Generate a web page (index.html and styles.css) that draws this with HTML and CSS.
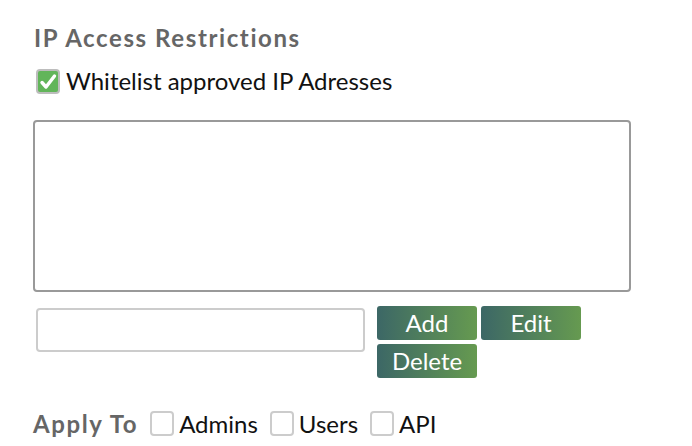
FILE: index.html
```html
<!DOCTYPE html>
<html>
<head>
<meta charset="utf-8">
<link rel="stylesheet" href="styles.css">
</head>
<body>
<div class="panel">
  <h2 class="title">IP Access Restrictions</h2>
  <label class="check-row">
    <span class="cb cb-on">
      <svg width="24" height="25" viewBox="0 0 24 25">
        <rect x="1" y="1" width="22" height="23" rx="3" fill="#62b55a" stroke="#bdbdbd" stroke-width="2"/>
        <path d="M6 13.5 L10 18 L18.5 7" fill="none" stroke="#fff" stroke-width="3.4" stroke-linecap="round" stroke-linejoin="round"/>
      </svg>
    </span>
    <span class="label-text">Whitelist approved IP Adresses</span>
  </label>
  <div class="listbox"></div>
  <div class="entry-row">
    <div class="ip-input"></div>
    <div class="btns">
      <button class="btn">Add</button>
      <button class="btn">Edit</button>
      <button class="btn">Delete</button>
    </div>
  </div>
  <div class="apply-row">
    <span class="apply-label">Apply To</span>
    <span class="cb cb-off"></span><span class="opt">Admins</span>
    <span class="cb cb-off"></span><span class="opt">Users</span>
    <span class="cb cb-off"></span><span class="opt">API</span>
  </div>
</div>
</body>
</html>
```
FILE: styles.css
```css
html, body {
  margin: 0;
  padding: 0;
  background: #fff;
  font-family: Lato, "Open Sans", sans-serif;
}
.panel {
  padding: 24px 0 0 33px;
  width: 600px;
}
.title {
  margin: 0;
  font-size: 24px;
  line-height: 28px;
  font-weight: 700;
  color: #666;
  letter-spacing: 1.6px;
  padding-left: 1px;
}
.check-row {
  display: flex;
  align-items: center;
  margin-top: 17px;
  height: 25px;
  padding-left: 3px;
}
.cb {
  display: inline-block;
  flex: none;
}
.cb-on {
  width: 24px;
  height: 25px;
}
.cb-on svg { display: block; }
.label-text {
  margin-left: 6px;
  font-size: 24px;
  line-height: 28px;
  color: #111;
  position: relative;
  top: -1px;
}
.listbox {
  margin-top: 26px;
  width: 594px;
  height: 168px;
  border: 2px solid #999;
  border-radius: 4px;
}
.entry-row {
  display: flex;
  margin-top: 14px;
  padding-left: 3px;
}
.ip-input {
  width: 325px;
  height: 40px;
  margin-top: 2px;
  border: 2px solid #ccc;
  border-radius: 4px;
  flex: none;
}
.btns {
  margin-left: 12px;
  width: 208px;
  display: flex;
  flex-wrap: wrap;
  gap: 4px;
}
.btn {
  width: 100px;
  height: 34px;
  border: none;
  border-radius: 3px;
  padding: 0;
  background: linear-gradient(to right, #3c6766, #669a50);
  color: #fff;
  font-family: Lato, "Open Sans", sans-serif;
  font-size: 24px;
  line-height: 34px;
}
.apply-row {
  display: flex;
  align-items: center;
  margin-top: 31px;
  height: 28px;
}
.apply-label {
  font-size: 24px;
  font-weight: 700;
  color: #666;
  letter-spacing: 1.6px;
  margin-right: 12px;
}
.cb-off {
  width: 20px;
  height: 21px;
  border: 2px solid #ccc;
  border-radius: 4px;
  background: #fff;
}
.opt {
  font-size: 24px;
  color: #111;
  margin-left: 5px;
  margin-right: 12px;
}
```
